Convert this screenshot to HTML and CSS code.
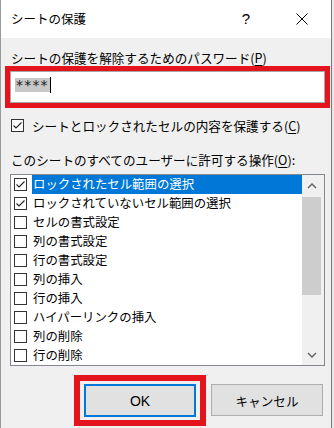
FILE: index.html
```html
<!DOCTYPE html>
<html lang="ja">
<head>
<meta charset="utf-8">
<title>シートの保護</title>
<link rel="stylesheet" href="styles.css">
</head>
<body>
<div class="dialog">
  <div class="titlebar">
    <span class="title">シートの保護</span>
    <span class="help">?</span>
    <span class="close"><svg width="12" height="12" viewBox="0 0 12 12"><path d="M0.5 0.5 L11.5 11.5 M11.5 0.5 L0.5 11.5" stroke="#000" stroke-width="1" fill="none"/></svg></span>
  </div>
  <div class="content">
    <div class="pw-label">シートの保護を解除するためのパスワード(<u>P</u>)</div>
    <div class="pw-frame">
      <div class="pw-input"><span class="sel">****</span><span class="caret"></span></div>
    </div>
    <div class="check-row">
      <span class="cb"><svg width="11" height="11" viewBox="0 0 11 11"><path d="M1.5 5.5 L4 8 L9.5 2.5" stroke="#222" stroke-width="1.1" fill="none"/></svg></span>
      <span class="check-text">シートとロックされたセルの内容を保護する(<u>C</u>)</span>
    </div>
    <div class="ops-label">このシートのすべてのユーザーに許可する操作(<u>O</u>):</div>
    <div class="listbox">
      <ul class="items">
        <li class="item selected"><span class="cb"><svg width="11" height="11" viewBox="0 0 11 11"><path d="M1.5 5.5 L4 8 L9.5 2.5" stroke="#222" stroke-width="1.1" fill="none"/></svg></span><span class="item-text">ロックされたセル範囲の選択</span></li>
        <li class="item"><span class="cb"><svg width="11" height="11" viewBox="0 0 11 11"><path d="M1.5 5.5 L4 8 L9.5 2.5" stroke="#222" stroke-width="1.1" fill="none"/></svg></span><span class="item-text">ロックされていないセル範囲の選択</span></li>
        <li class="item"><span class="cb"></span><span class="item-text">セルの書式設定</span></li>
        <li class="item"><span class="cb"></span><span class="item-text">列の書式設定</span></li>
        <li class="item"><span class="cb"></span><span class="item-text">行の書式設定</span></li>
        <li class="item"><span class="cb"></span><span class="item-text">列の挿入</span></li>
        <li class="item"><span class="cb"></span><span class="item-text">行の挿入</span></li>
        <li class="item"><span class="cb"></span><span class="item-text">ハイパーリンクの挿入</span></li>
        <li class="item"><span class="cb"></span><span class="item-text">列の削除</span></li>
        <li class="item"><span class="cb"></span><span class="item-text">行の削除</span></li>
      </ul>
      <div class="scrollbar">
        <div class="arrow"><svg width="10" height="6" viewBox="0 0 10 6"><path d="M1 5 L5 1 L9 5" stroke="#606060" stroke-width="1.4" fill="none"/></svg></div>
        <div class="thumb"></div>
        <div class="track"></div>
        <div class="arrow"><svg width="10" height="6" viewBox="0 0 10 6"><path d="M1 1 L5 5 L9 1" stroke="#606060" stroke-width="1.4" fill="none"/></svg></div>
      </div>
    </div>
    <div class="buttons">
      <div class="ok-frame"><div class="btn ok">OK</div></div>
      <div class="btn cancel">キャンセル</div>
    </div>
  </div>
</div>
</body>
</html>
```
FILE: styles.css
```css
html, body {
  margin: 0;
  padding: 0;
}
body {
  width: 334px;
  height: 428px;
  overflow: hidden;
  background: #e8e8e8;
  font-family: "Noto Sans CJK JP", "Noto Sans", sans-serif;
  color: #000;
}
.dialog {
  box-sizing: border-box;
  width: 332px;
  height: 428px;
  background: #f0f0f0;
  border-left: 1px solid #9a9a9a;
  border-right: 1px solid #7a7a7a;
}
.titlebar {
  height: 38px;
  background: #fff;
  display: flex;
  align-items: center;
}
.title {
  flex: 1;
  padding-left: 10px;
  font-size: 12.5px;
  line-height: 16px;
}
.help {
  width: 20px;
  margin-right: 23px;
  text-align: center;
  font-family: "Liberation Sans", sans-serif;
  font-size: 15px;
  line-height: 16px;
}
.close {
  width: 46px;
  margin-right: 6px;
  display: flex;
  justify-content: center;
  align-items: center;
}
.close svg { display: block; }
.pw-label {
  margin-top: 12px;
  padding-left: 10px;
  font-size: 12.6px;
  line-height: 16px;
  height: 16px;
}
u { text-underline-offset: 2px; }
.pw-frame {
  box-sizing: border-box;
  margin-left: 4px;
  width: 325px;
  height: 42px;
  border: 5px solid #e3141c;
}
.pw-input {
  box-sizing: border-box;
  height: 32px;
  background: #fff;
  border: 1px solid #a8a8a8;
  padding: 6px 0 0 4px;
  display: flex;
  align-items: flex-start;
}
.sel {
  display: inline-block;
  width: 35px;
  height: 14px;
  background: #c8c8c8;
  font-family: "DejaVu Sans", sans-serif;
  font-size: 14px;
  line-height: 15px;
  letter-spacing: 1.2px;
  padding-left: 1px;
  box-sizing: border-box;
  color: #222;
  overflow: hidden;
}
.caret {
  display: inline-block;
  width: 1px;
  height: 16px;
  margin-top: -1px;
  background: #000;
}
.cb {
  box-sizing: border-box;
  width: 13px;
  height: 13px;
  border: 1px solid #333;
  background: #fff;
  display: flex;
  align-items: center;
  justify-content: center;
  flex: none;
}
.cb svg { display: block; }
.check-row {
  margin-top: 8px;
  height: 19px;
  padding-left: 10px;
  display: flex;
  align-items: center;
}
.check-text {
  margin-left: 8px;
  font-size: 12.6px;
  line-height: 19px;
}
.ops-label {
  margin-top: 16px;
  padding-left: 10px;
  height: 18px;
  font-size: 12.6px;
  line-height: 18px;
}
.listbox {
  box-sizing: border-box;
  margin-top: 5px;
  margin-left: 9px;
  width: 315px;
  height: 192px;
  background: #fff;
  border: 1px solid #828790;
  display: flex;
}
.items {
  list-style: none;
  margin: 0;
  padding: 0;
  flex: 1;
}
.item {
  height: 19px;
  display: flex;
  align-items: center;
}
.item .cb {
  margin-left: 3px;
}
.item-text {
  flex: 1;
  margin-left: 5px;
  padding-left: 1px;
  height: 19px;
  font-size: 12.4px;
  line-height: 19px;
}
.item.selected .item-text {
  background: #0078d7;
  color: #fff;
}
.scrollbar {
  width: 22px;
  background: #f0f0f0;
  display: flex;
  flex-direction: column;
}
.arrow {
  height: 21px;
  display: flex;
  align-items: center;
  justify-content: center;
  padding-right: 3px;
}
.arrow svg { display: block; }
.thumb {
  margin-top: 1px;
  height: 98px;
  width: 19px;
  background: #cdcdcd;
}
.track { flex: 1; }
.buttons {
  margin-top: 9px;
  padding-left: 73px;
  display: flex;
  align-items: flex-start;
}
.ok-frame {
  border: 6px solid #e3141c;
  padding: 3px 4px;
}
.btn {
  box-sizing: border-box;
  width: 112px;
  height: 33px;
  background: #e1e1e1;
  border: 1px solid #adadad;
  display: flex;
  align-items: center;
  justify-content: center;
  font-size: 13px;
}
.btn.ok {
  border: 2px solid #0078d7;
  font-family: "Liberation Sans", "Noto Sans CJK JP", sans-serif;
  font-size: 14px;
}
.btn.cancel {
  margin-left: 5px;
  margin-top: 9px;
  height: 32px;
  font-size: 12.6px;
}
```
